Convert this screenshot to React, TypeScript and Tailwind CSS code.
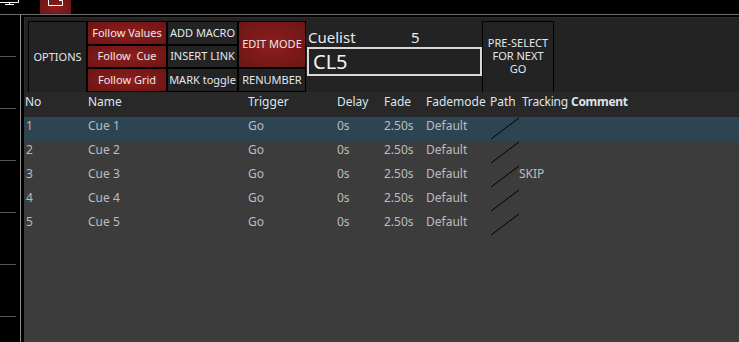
import React from "react";

const font = { fontFamily: '"Noto Sans", "Open Sans", sans-serif' };

const cues = [
    { no: "1", name: "Cue 1", comment: "" },
    { no: "2", name: "Cue 2", comment: "" },
    { no: "3", name: "Cue 3", comment: "SKIP" },
    { no: "4", name: "Cue 4", comment: "" },
    { no: "5", name: "Cue 5", comment: "" },
];

const cols = "grid grid-cols-[63px_160px_89px_47px_42px_64px_32px_49px_1fr] pl-[1px]";

const RedBtn = ({ children, className = "" }: { children: React.ReactNode; className?: string }) => (
    <div
        className={
            "flex items-center justify-center border border-black bg-[radial-gradient(ellipse_at_center,#8e1e1e,#6c1515)] text-[#ece6e6] text-[11px] whitespace-pre " +
            className
        }
    >
        {children}
    </div>
);

const GrayBtn = ({ children, className = "" }: { children: React.ReactNode; className?: string }) => (
    <div
        className={
            "flex items-center justify-center border border-black bg-[#232323] text-[#e2e8ef] text-[11px] whitespace-pre " +
            className
        }
    >
        {children}
    </div>
);

const PathMark = () => (
    <svg width="30" height="24" className="absolute left-0 top-0">
        <line x1="1" y1="22" x2="29" y2="1" stroke="#000" strokeWidth="1" />
    </svg>
);

export default function App() {
    return (
        <div className="w-[739px] h-[342px] bg-black flex flex-col overflow-hidden" style={font}>
            {/* top strip */}
            <div className="h-[14px] flex shrink-0">
                <div className="w-[40px] relative">
                    <svg width="22" height="14" className="absolute left-0 top-0">
                        <path d="M0 2.5 H18.5 V-2" stroke="#fff" fill="none" strokeWidth="1" />
                        <path d="M9.5 2.5 V4.5 M5 4.5 H14" stroke="#fff" fill="none" strokeWidth="1" />
                    </svg>
                </div>
                <div className="w-[31px] bg-[radial-gradient(ellipse_at_center,#8e1e1e,#6c1515)] relative">
                    <svg width="31" height="14" className="absolute left-0 top-0">
                        <path d="M8.5 -2 V5.5 H22.5 V0.5 H19" stroke="#fff" fill="none" strokeWidth="1" />
                    </svg>
                </div>
            </div>
            <div className="h-px bg-[#6e6e6e] shrink-0" />

            <div className="flex flex-1 min-h-0">
                {/* left sidebar */}
                <div className="w-[20px] flex flex-col pt-[41px]">
                    {[0, 1, 2, 3, 4, 5].map((i) => (
                        <div key={i} className="h-[52px] shrink-0">
                            <div className="w-[16px] h-px bg-[#555]" />
                        </div>
                    ))}
                </div>
                <div className="w-px bg-[#8a8a8a]" />
                <div className="w-[3px]" />

                {/* main panel */}
                <div className="flex-1 flex flex-col pt-[2px] min-w-0">
                    <div className="flex-1 flex flex-col bg-[#3c3c3c]">
                        {/* toolbar */}
                        <div className="flex h-[75px] pt-[3px] pl-[3px] bg-[#232323] border-t border-l border-[#2c2c2c]">
                            <GrayBtn className="w-[59px] h-[72px]">OPTIONS</GrayBtn>
                            <div className="flex flex-col w-[80px]">
                                <RedBtn className="h-[24px]">Follow Values</RedBtn>
                                <RedBtn className="h-[24px]">{"Follow  Cue"}</RedBtn>
                                <RedBtn className="h-[24px]">Follow Grid</RedBtn>
                            </div>
                            <div className="flex flex-col w-[71px]">
                                <GrayBtn className="h-[24px]">ADD MACRO</GrayBtn>
                                <GrayBtn className="h-[24px]">INSERT LINK</GrayBtn>
                                <GrayBtn className="h-[24px]">MARK toggle</GrayBtn>
                            </div>
                            <div className="flex flex-col w-[68px]">
                                <RedBtn className="h-[48px]">EDIT MODE</RedBtn>
                                <GrayBtn className="h-[24px]">RENUMBER</GrayBtn>
                            </div>
                            <div className="w-[176px] pl-[1px] flex flex-col">
                                <div className="flex items-end h-[25px] text-[15px] leading-none text-[#e6ebf0]">
                                    <span className="pl-[1px] w-[104px] pb-[1px]">Cuelist</span>
                                    <span className="pb-[1px]">5</span>
                                </div>
                                <div className="mt-[1px] h-[29px] w-[175px] border-2 border-[#d9d9d9] bg-[#222] flex items-center pl-[4px] text-[20px] leading-none text-[#f2f2f2]">
                                    CL5
                                </div>
                            </div>
                            <div className="w-[72px] h-[72px] border border-black flex items-center justify-center text-center text-[11px] leading-[13px] text-[#e2e8ef] pb-[3px]">
                                PRE-SELECT
                                <br />
                                FOR NEXT
                                <br />
                                GO
                            </div>
                        </div>

                        {/* header */}
                        <div className={cols + " h-[25px] items-center pb-[6px] bg-[#282828] text-[12px] text-[#dbe4ee]"}>
                            <span>No</span>
                            <span>Name</span>
                            <span>Trigger</span>
                            <span>Delay</span>
                            <span>Fade</span>
                            <span>Fademode</span>
                            <span>Path</span>
                            <span className="tracking-[-0.2px]">Tracking</span>
                            <span className="font-bold tracking-[-0.3px]">Comment</span>
                        </div>

                        {/* rows */}
                        {cues.map((c, i) => (
                            <div
                                key={c.no}
                                className={
                                    cols +
                                    " h-[24px] items-start text-[12px] leading-[17px] text-[#bcbcbc] " +
                                    (i === 0 ? "bg-[#2d4553]" : "bg-[#3c3c3c]")
                                }
                            >
                                <span className="pl-[1px]">{c.no}</span>
                                <span>{c.name}</span>
                                <span>Go</span>
                                <span>0s</span>
                                <span>2.50s</span>
                                <span>Default</span>
                                <span className="relative h-[24px]">
                                    <PathMark />
                                </span>
                                <span className="-ml-[3px]">{c.comment}</span>
                                <span />
                            </div>
                        ))}
                    </div>
                </div>
            </div>
        </div>
    );
}
